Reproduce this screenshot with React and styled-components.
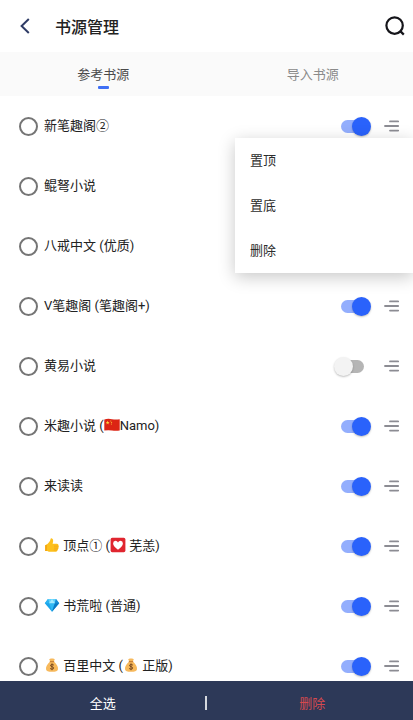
import React, { useState } from "react";
import styled, { createGlobalStyle } from "styled-components";

const SOURCES = [
  { id: 1, name: ["新笔趣阁②"], on: true },
  { id: 2, name: ["鲲弩小说"], on: true },
  { id: 3, name: ["八戒中文 (优质)"], on: true },
  { id: 4, name: ["V笔趣阁 (笔趣阁+)"], on: true },
  { id: 5, name: ["黄易小说"], on: false },
  { id: 6, name: ["米趣小说 (", "flag", "Namo)"], on: true },
  { id: 7, name: ["来读读"], on: true },
  { id: 8, name: ["thumb", " 顶点① (", "heart", " 芜恙)"], on: true },
  { id: 9, name: ["gem", " 书荒啦 (普通)"], on: true },
  { id: 10, name: ["money", " 百里中文 (", "money", " 正版)"], on: true },
];

const EMOJI = {
  flag: (
    <>
      <path d="M0.3 2.4Q4 1.4 8 2.2T15.7 2.2V13.4Q12 14.2 8 13.5T0.3 13.6Z" fill="#dc2414" />
      <path
        d="M3.6 3.8l.5 1.3 1.4.1-1.1.9.4 1.3-1.2-.8-1.2.8.4-1.3-1.1-.9 1.4-.1z"
        fill="#ffd43a"
      />
      <circle cx="6.8" cy="4" r="0.5" fill="#ffd43a" />
      <circle cx="7.6" cy="5.4" r="0.5" fill="#ffd43a" />
      <circle cx="7.4" cy="7" r="0.5" fill="#ffd43a" />
    </>
  ),
  thumb: (
    <>
      <path
        d="M1.2 8.2Q3.8 7.4 5.4 4.8Q6.5 3 6.6 1.7Q7 .8 8.1 1.4Q9.6 2.3 9.1 4.4L8.6 6.8H13Q14.6 7 14.4 8.3Q15.2 9.1 14.5 10.2Q15 11.3 14 12.1Q14.2 13.3 13 13.9Q12.6 14.8 11 14.8H6.6Q4.6 14.7 3.4 13.9H1.2Z"
        fill="#fdc01c"
      />
      <path d="M10 9.1h4.2M10 11.1h4M9.8 13h3.2" stroke="#ee9b12" strokeWidth="0.6" />
      <path d="M1.2 8.2l1.7-.5v6.2H1.2z" fill="#f2a414" />
    </>
  ),
  heart: (
    <>
      <rect x="0.6" y="0.8" width="14.8" height="14.4" rx="1.6" fill="#e0252f" />
      <path
        d="M8 12.8Q3.2 9.4 3.1 6.6Q3.1 4 5.5 3.8Q7.2 3.8 8 5.4Q8.8 3.8 10.5 3.8Q12.9 4 12.9 6.6Q12.8 9.4 8 12.8Z"
        fill="#fff"
      />
    </>
  ),
  gem: (
    <>
      <path d="M4 2H12L15.2 6.2L8 14.8L.8 6.2Z" fill="#1ba4ea" />
      <path d="M4 2H12L10.8 6.2H5.2Z" fill="#63d2fb" />
      <path d="M4 2L.8 6.2H5.2Z" fill="#2bb4f2" />
      <path d="M12 2l3.2 4.2h-4.4z" fill="#168bd4" />
      <path d="M5.2 6.2h5.6L8 14.8z" fill="#30b9f4" />
      <path d="M10.8 6.2h4.4L8 14.8z" fill="#0a79c4" />
      <path d="M5.2 6.2L8 2l2.8 4.2" fill="#a5ebff" />
    </>
  ),
  money: (
    <>
      <path
        d="M6.2 4.6L5.2 2.2Q6.5 1 8 1.6Q9.5 1 10.8 2.2L9.8 4.6Q14.4 8.6 14 12.2Q13.6 14.8 8 14.8T2 12.2Q1.6 8.6 6.2 4.6Z"
        fill="#f7b95c"
      />
      <path d="M5.8 4.7h4.4" stroke="#bd7430" strokeWidth="1" />
      <path
        d="M9.9 8.1Q8 6.9 6.8 7.9Q6 9.3 8 9.7Q10.4 10.2 9.5 11.7Q8 12.9 6.1 11.5M8 6.4v6.8"
        fill="none"
        stroke="#7b4b21"
        strokeWidth="1"
      />
    </>
  ),
};

const NamePart = ({ part }) =>
  EMOJI[part] ? (
    <Emoji viewBox="0 0 16 16" aria-hidden="true">
      {EMOJI[part]}
    </Emoji>
  ) : (
    part
  );

const SourceRow = ({ source, menuOpen, onMenu }) => {
  const [on, setOn] = useState(source.on);

  return (
    <Row>
      <NameLabel>
        <Check type="checkbox" />
        <Name>
          {source.name.map((part, i) => (
            <NamePart key={i} part={part} />
          ))}
        </Name>
      </NameLabel>
      <Switch
        type="checkbox"
        role="switch"
        aria-label="启用"
        checked={on}
        onChange={(e) => setOn(e.target.checked)}
      />
      <IconButton type="button" aria-label="更多" onClick={onMenu}>
        <svg
          width="15"
          height="12"
          viewBox="0 0 15 12"
          stroke="#8c8c93"
          strokeWidth="1.8"
          strokeLinecap="round"
        >
          <path d="M6 1.4h8.2M1 6h13.2M6 10.6h8.2" />
        </svg>
      </IconButton>
      {menuOpen && (
        <Menu>
          <MenuItem type="button">置顶</MenuItem>
          <MenuItem type="button">置底</MenuItem>
          <MenuItem type="button">删除</MenuItem>
        </Menu>
      )}
    </Row>
  );
};

const App = () => {
  const [tab, setTab] = useState(0);
  const [menuId, setMenuId] = useState(1);

  return (
    <>
      <GlobalStyle />
      <Page>
        <Header>
          <IconButton type="button" aria-label="返回">
            <svg width="10" height="16" viewBox="0 0 10 16" fill="none" stroke="#2f3c66" strokeWidth="2">
              <path d="M8.8 1L1.6 8l7.2 7" />
            </svg>
          </IconButton>
          <Title>书源管理</Title>
          <IconButton type="button" aria-label="搜索">
            <svg width="20" height="20" viewBox="0 0 20 20" fill="none" stroke="#15151a" strokeWidth="2.2">
              <circle cx="9.6" cy="9.6" r="8.2" />
              <path d="M14.8 14.6l4 4" />
            </svg>
          </IconButton>
        </Header>
        <Tabs>
          {["参考书源", "导入书源"].map((text, i) => (
            <Tab key={text} type="button" $active={tab === i} onClick={() => setTab(i)}>
              {text}
            </Tab>
          ))}
        </Tabs>
        <List>
          {SOURCES.map((source) => (
            <SourceRow
              key={source.id}
              source={source}
              menuOpen={menuId === source.id}
              onMenu={() => setMenuId(menuId === source.id ? null : source.id)}
            />
          ))}
        </List>
        <Footer>
          <FooterButton type="button">全选</FooterButton>
          <Divider />
          <FooterButton type="button" $danger>
            删除
          </FooterButton>
        </Footer>
      </Page>
    </>
  );
};

export default App;

const GlobalStyle = createGlobalStyle`
  * {
    box-sizing: border-box;
  }

  body {
    margin: 0;
    background: #fff;
    color: #2c2c2c;
    font-family: Roboto, "Noto Sans CJK SC", sans-serif;
    font-size: 13px;
  }

  button {
    border: 0;
    padding: 0;
    background: none;
    color: inherit;
    font: inherit;
    cursor: pointer;
  }
`;

const Page = styled.div`
  display: flex;
  flex-direction: column;
  height: 100vh;
`;

const Header = styled.header`
  display: flex;
  align-items: center;
  height: 52px;
  padding: 0 8px 0 20px;
`;

const Title = styled.h1`
  flex: 1;
  margin: 0 0 0 25px;
  color: #222;
  font-size: 16px;
  font-weight: 500;
`;

const IconButton = styled.button`
  display: flex;
`;

const Tabs = styled.nav`
  display: flex;
  height: 44px;
  background: #fafafa;
`;

const Tab = styled.button`
  display: flex;
  flex-direction: column;
  align-items: center;
  justify-content: flex-end;
  gap: 1px;
  width: 50%;
  padding-bottom: 7px;
  color: ${(props) => (props.$active ? "#4a4a4a" : "#8a8a8a")};
  line-height: 20px;

  &:last-child {
    padding-left: 6px;
  }

  &::after {
    content: "";
    width: 11px;
    height: 3px;
    border-radius: 1px;
    background: ${(props) => (props.$active ? "#3f6ff5" : "transparent")};
  }
`;

const List = styled.ul`
  flex: 1;
  min-height: 0;
  margin: 0;
  padding: 0;
  overflow-y: auto;
  list-style: none;
  scrollbar-width: none;
`;

const Row = styled.li`
  position: relative;
  display: flex;
  align-items: center;
  height: 60px;
  padding: 0 14px 0 19px;
`;

const NameLabel = styled.label`
  display: flex;
  flex: 1;
  align-items: center;
  gap: 6px;
`;

const Check = styled.input`
  appearance: none;
  width: 19px;
  height: 19px;
  margin: 0;
  border: 2px solid #757575;
  border-radius: 50%;

  &:checked {
    border-color: #2a62fb;
    background: #2a62fb;
  }
`;

const Name = styled.span`
  color: #222;
  line-height: 20px;
`;

const Emoji = styled.svg`
  width: 16px;
  height: 16px;
  vertical-align: text-bottom;
`;

const Switch = styled.input`
  position: relative;
  display: flex;
  align-items: center;
  appearance: none;
  width: 37px;
  height: 19px;
  margin: 0 13px 0 0;
  padding: 0 7px;

  &::before {
    content: "";
    flex: 1;
    height: 13px;
    border-radius: 7px;
    background: ${(props) => (props.checked ? "#93aefd" : "#b5b5b5")};
  }

  &::after {
    content: "";
    position: absolute;
    top: 0;
    left: ${(props) => (props.checked ? "18px" : "0")};
    width: 19px;
    height: 19px;
    border-radius: 50%;
    background: ${(props) => (props.checked ? "#2a62fb" : "#f3f3f3")};
    box-shadow: 0 1px 2px rgba(0, 0, 0, 0.25);
  }
`;

const Menu = styled.div`
  position: absolute;
  z-index: 1;
  top: 42px;
  right: 0;
  display: flex;
  flex-direction: column;
  width: 178px;
  background: #fff;
  box-shadow: 0 4px 16px rgba(0, 0, 0, 0.22);
`;

const MenuItem = styled.button`
  height: 45px;
  padding: 0 15px 2px;
  text-align: left;
`;

const Footer = styled.footer`
  display: flex;
  align-items: center;
  height: 39px;
  background: #2d3958;
`;

const FooterButton = styled.button`
  flex: 0 1 50%;
  height: 39px;
  padding-top: 3px;
  color: ${(props) => (props.$danger ? "#d64a4e" : "#fff")};

  &:last-child {
    padding-left: 4px;
  }
`;

const Divider = styled.span`
  flex: none;
  width: 2px;
  height: 14px;
  margin-top: 4px;
  background: #d5d8de;
`;
